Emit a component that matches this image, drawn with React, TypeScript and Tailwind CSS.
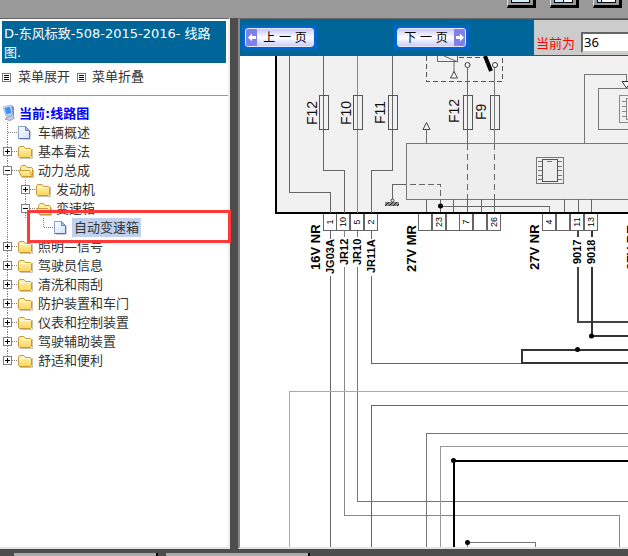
import type { ReactNode } from "react";

const CJK = "font-['DejaVu_Sans','Noto_Sans_CJK_SC',sans-serif]";

type Kind = "page" | "folder" | "open";
type Cell = "line" | "tee" | "elbow" | "blank" | "plus" | "minus";
type Node = { label: string; kind: Kind; cells: Cell[]; selected?: boolean };

const nodes: Node[] = [
  { label: "车辆概述", kind: "page", cells: ["tee"] },
  { label: "基本看法", kind: "folder", cells: ["plus"] },
  { label: "动力总成", kind: "open", cells: ["minus"] },
  { label: "发动机", kind: "folder", cells: ["line", "plus"] },
  { label: "变速箱", kind: "open", cells: ["line", "minus"] },
  { label: "自动变速箱", kind: "page", cells: ["line", "blank", "elbow"], selected: true },
  { label: "照明—信号", kind: "folder", cells: ["plus"] },
  { label: "驾驶员信息", kind: "folder", cells: ["plus"] },
  { label: "清洗和雨刮", kind: "folder", cells: ["plus"] },
  { label: "防护装置和车门", kind: "folder", cells: ["plus"] },
  { label: "仪表和控制装置", kind: "folder", cells: ["plus"] },
  { label: "驾驶辅助装置", kind: "folder", cells: ["plus"] },
  { label: "舒适和便利", kind: "folder", cells: ["plus"] },
];

function CellArt({ type, last }: { type: Cell; last: boolean }) {
  const boxed = type === "plus" || type === "minus";
  return (
    <svg width="18" height="19" className="block shrink-0" shapeRendering="crispEdges" aria-hidden="true">
      {type !== "blank" && (
        <path d={type === "elbow" || last ? "M7.5 0V10" : "M7.5 0V19"} stroke="#808080" strokeDasharray="1 1" />
      )}
      {type !== "blank" && type !== "line" && <path d="M8 9.5H18" stroke="#808080" strokeDasharray="1 1" />}
      {boxed && (
        <>
          <rect x="3.5" y="5.5" width="8" height="8" fill="#fff" stroke="#808080" />
          <path d={type === "plus" ? "M5 9.5H10M7.5 7V12" : "M5 9.5H10"} stroke="#000" />
        </>
      )}
    </svg>
  );
}

function NodeIcon({ kind }: { kind: Kind }) {
  return (
    <svg width="18" height="19" className="block shrink-0" aria-hidden="true">
      <defs>
        <linearGradient id="folderFill" x1="0" y1="0" x2="0" y2="1">
          <stop offset="0" stopColor="#fff3b8" />
          <stop offset="1" stopColor="#fbd65c" />
        </linearGradient>
        <linearGradient id="pageFill" x1="0" y1="0" x2="1" y2="1">
          <stop offset="0" stopColor="#ffffff" />
          <stop offset="1" stopColor="#cfe0ff" />
        </linearGradient>
      </defs>
      {kind === "page" && (
        <>
          <path d="M2 16.500H12.500V8" fill="none" stroke="#d0d0d4" />
          <path d="M0.500 3.500H7.500L11.500 7.500V15.500H0.500Z" fill="url(#pageFill)" stroke="#8d9fcf" />
          <path d="M11.500 8V15.500H1" fill="none" stroke="#5a6caa" />
          <path d="M7.500 3.500V7.500H11.500Z" fill="#9ebcf2" stroke="#6f86c4" />
        </>
      )}
      {kind === "folder" && (
        <>
          <path d="M2 16.500H14.500V7" fill="none" stroke="#c8c4ba" />
          <path d="M0.500 14.500V5.500L2 4.500H6L7.500 6.500H12.500L13.500 7.500V14.500L12.500 15.500H1.500Z" fill="url(#folderFill)" stroke="#c69a35" />
          <path d="M1.500 7.500H12.500" stroke="#fffbe0" />
        </>
      )}
      {kind === "open" && (
        <>
          <path d="M4 16.500H15.500V9" fill="none" stroke="#c8c4ba" />
          <path d="M2.500 14V6.500L4 4.500H7.500L9 6.500H13.500L14.500 7.500V14.500H3Z" fill="#ffefa6" stroke="#c69a35" />
          <path d="M0.500 9.500H11.500L14.500 15.500H3.500Z" fill="url(#folderFill)" stroke="#c69a35" />
        </>
      )}
    </svg>
  );
}

function MenuIcon() {
  return (
    <svg width="9" height="9" shapeRendering="crispEdges" className="block shrink-0" aria-hidden="true">
      <rect x="0.5" y="0.5" width="8" height="8" fill="#fff" stroke="#777" />
      <path d="M2 2.500H7M2 4.500H7M2 6.500H7" stroke="#000" />
    </svg>
  );
}

function ComputerIcon() {
  return (
    <svg width="17" height="19" className="block shrink-0" aria-hidden="true">
      <path d="M1 3L9 1L11 10L4 12Z" fill="#d5e6fb" stroke="#a9bddc" />
      <path d="M2.500 4L8 2.500L9.500 9L4.500 10.500Z" fill="#3f93f2" />
      <path d="M9.500 1L12 3V13L10.500 11Z" fill="#7f90c0" />
      <path d="M5 13L10 11.500L12.500 14L8 16.500L3 15Z" fill="#c3cce2" stroke="#8f9cc0" />
    </svg>
  );
}

function Sidebar() {
  return (
    <aside className="relative w-[230px] shrink-0 border-t border-r-2 border-b-2 border-t-[#666] border-r-[#eee] border-b-[#e4e4e4] bg-white pt-[2px] text-[13px] text-[#333]">
      <h1 className="mr-[2px] ml-[2px] bg-[#006699] px-[2px] pt-[3px] pb-px text-[13px] leading-[19px] font-normal text-white">
        D-东风标致-508-2015-2016- 线路图.
      </h1>
      <div className="flex h-[33px] items-center border-b border-[#999] pb-1 pl-[2px]">
        <button className="mr-[7px] flex items-center gap-[7px]"><MenuIcon />菜单展开</button>
        <button className="flex items-center gap-[6px]"><MenuIcon />菜单折叠</button>
      </div>
      <div className="mt-[8px] flex h-[19px] items-center pl-[2px] font-bold text-[#0000ff]">
        <ComputerIcon />
        <a href="#root">当前:线路图</a>
      </div>
      <ul>
        {nodes.map((n, i) => (
          <li key={n.label} className="flex h-[19px] items-center">
            {n.cells.map((c, k) => (
              <CellArt key={k} type={c} last={i === nodes.length - 1} />
            ))}
            <NodeIcon kind={n.kind} />
            <a
              href="#node"
              className={n.selected ? "bg-[#c1d2ee] px-[2px] leading-[19px]" : "px-[2px] leading-[19px]"}
            >
              {n.label}
            </a>
          </li>
        ))}
      </ul>
      <div className="absolute top-[191px] left-[27px] z-10 h-[33px] w-[204px] border-3 border-[#ff3838]" />
    </aside>
  );
}

function PageButton({ children, back }: { children: ReactNode; back?: boolean }) {
  const arrow = (
    <span className="flex h-full w-[11px] items-center justify-center bg-[#8080ea]">
      <svg width="8" height="9" aria-hidden="true">
        <path d={back ? "M0 4.500L4 0.500V3H8V6H4V8.500Z" : "M8 4.500L4 0.500V3H0V6H4V8.500Z"} fill="#fff" />
      </svg>
    </span>
  );
  return (
    <button className="h-[25px] w-[75px] shrink-0 border-3 border-[#0066cc] bg-[#0066cc]">
      <span className="flex h-[19px] items-center overflow-hidden rounded-[3px] border border-[#e8e8ff] bg-linear-to-b from-[#c8c8fb] via-white to-[#ccccfc] text-[12px] font-normal text-black">
        {back && arrow}
        <span className="flex-1 text-center">{children}</span>
        {!back && arrow}
      </span>
    </button>
  );
}

type WireProps = { d: string; c?: string; w?: number; dash?: string };
function Wire({ d, c = "#666", w = 1, dash }: WireProps) {
  return <path d={d} fill="none" stroke={c} strokeWidth={w} strokeDasharray={dash} />;
}

const fuses = [
  { x: 323, label: "F12", tx: 317, ty: 125 },
  { x: 357, label: "F10", tx: 351, ty: 125 },
  { x: 392, label: "F11", tx: 385, ty: 124 },
  { x: 467, label: "F12", tx: 459, ty: 123 },
  { x: 494, label: "F9", tx: 486, ty: 120 },
];

const pins = [
  { x: 324, n: "1" }, { x: 337, n: "10" }, { x: 351, n: "5" }, { x: 365, n: "2" },
  { x: 419, n: "" }, { x: 433, n: "23" }, { x: 447, n: "" }, { x: 460, n: "7" }, { x: 474, n: "" }, { x: 488, n: "26" },
  { x: 543, n: "4" }, { x: 557, n: "" }, { x: 571, n: "11" }, { x: 585, n: "13" },
];

const connectors = [
  { x: 320, y: 270, t: "16V NR" }, { x: 416, y: 272, t: "27V MR" }, { x: 539, y: 270, t: "27V NR" }, { x: 636, y: 270, t: "27V BE" },
];

const wireNames = [
  { x: 334, y: 274, t: "JG03A" }, { x: 348, y: 265, t: "JR12" }, { x: 361, y: 265, t: "JR10" },
  { x: 375, y: 273, t: "JR11A" }, { x: 581, y: 264, t: "9017" }, { x: 595, y: 264, t: "9018" },
];

function Diagram() {
  return (
    <svg
      width="388"
      height="491"
      viewBox="240 56 388 491"
      className="block shrink-0 font-['Liberation_Sans',Arial,sans-serif]"
      shapeRendering="crispEdges"
      role="img"
      aria-label="线路图"
    >
      <rect x="276" y="56" width="352" height="157" fill="#f1f1f1" />
      <Wire d="M276 56V213H628" c="#000" w={2} />
      <Wire d="M289.500 56V192.500H330.500V213" />
      <Wire d="M323.500 56V170.500H344.500V213" />
      <Wire d="M357.500 56V213" c="#888" />
      <Wire d="M392.500 56V170.500H371.500V213" />
      {fuses.map((f) => (
        <g key={f.x}>
          <rect x={f.x - 3.5} y="95.500" width="9" height="34" fill="none" stroke="#555" />
          <text x={f.tx} y={f.ty} transform={`rotate(-90 ${f.tx} ${f.ty})`} fontSize="14" fill="#111">{f.label}</text>
        </g>
      ))}
      <path d="M423 129.500L426.500 122.500L430 129.500Z" fill="none" stroke="#444" shapeRendering="auto" />
      <Wire d="M426.500 129V143" />
      <rect x="406.500" y="143.500" width="230" height="56" fill="#eee" stroke="#777" />
      <Wire d="M584.500 143V74.500H626.500V82M628 88.500H598.500V129.500H628" c="#777" />
      <path d="M622 81.500H631L626.500 88Z" fill="#fff" stroke="#333" shapeRendering="auto" />
      <Wire d="M628 95.500H619.500V122.500H628M628 98.500H626.500V119.500H628M622 101.500H626M622 106.500H626M622 111.500H626M622 116.500H626" c="#888" />
      <Wire d="M426.500 56V81.500H502.500V56" c="#555" dash="5 3" />
      <path d="M437.500 56V61.500H457.500V56M444 56L458 62M454 61V72" fill="none" stroke="#666" shapeRendering="auto" />
      <path d="M450.500 78L454 71.500L457.500 78Z" fill="#fff" stroke="#444" shapeRendering="auto" />
      <Wire d="M459 57.500H486" c="#555" dash="5 3" />
      <Wire d="M467.500 68V144" />
      <Wire d="M494.500 68V144" c="#777" />
      <g shapeRendering="auto">
        <circle cx="467.500" cy="65" r="2.500" fill="#fff" stroke="#333" />
        <circle cx="495" cy="65" r="2.500" fill="#fff" stroke="#333" />
        <path d="M485 56L491 71" stroke="#000" strokeWidth="4" />
      </g>
      <Wire d="M467.500 144V199" dash="6 4" />
      <Wire d="M494.500 144V199" dash="6 4" />
      <Wire d="M406 184.500H392.500V200" />
      <Wire d="M410 184.500H440.500V205" dash="6 3" />
      <g shapeRendering="auto">
        <circle cx="392.500" cy="200.500" r="1.500" fill="#fff" stroke="#333" />
        <path d="M385 202H399V206H385Z" fill="#888" />
        <path d="M385 206L389 202M389 206L393 202M393 206L397 202M397 206L399 204" stroke="#222" />
      </g>
      <Wire d="M426.500 199V212M440.500 204V212M453.500 199V212M467.500 199V212M481.500 199V212M494.500 199V212M564.500 199V212M578.500 199V212M591.500 199V212M440 206.500H549.500V212" />
      <circle cx="440.500" cy="206" r="2.500" shapeRendering="auto" />
      <rect x="536.500" y="157.500" width="27" height="26" fill="none" stroke="#777" />
      <rect x="542.500" y="159.500" width="15" height="22" fill="none" stroke="#555" />
      <Wire d="M538 161.500H542M538 166.500H542M538 170.500H542M538 175.500H542M538 179.500H542M558 161.500H562M558 166.500H562M558 170.500H562M558 175.500H562M558 179.500H562M547 161.500H552" c="#777" />

      {pins.map((p) => (
        <g key={p.x}>
          <path d={`M${p.x - 0.5} 214V230.500H${p.x + 12.5}V214`} fill="#fff" stroke="#666" />
          <text x={p.x + 9} y="222" textAnchor="middle" transform={`rotate(-90 ${p.x + 9} 222)`} fontSize="9" fill="#000">{p.n}</text>
        </g>
      ))}
      {connectors.map((t) => (
        <text key={t.t} x={t.x} y={t.y} transform={`rotate(-90 ${t.x} ${t.y})`} fontSize="13" fontWeight="700" fill="#000">{t.t}</text>
      ))}

      <Wire d="M330.500 231V239M330.500 276V547" />
      <Wire d="M344.500 231V237M344.500 267V515.500H619.500V547" c="#888" />
      <Wire d="M357.500 231V237M357.500 267V501.500H628" c="#777" />
      <Wire d="M371.500 231V239M371.500 276V363.500H522" />
      <Wire d="M578 231V237M578 267V322H628" c="#444" w={2} />
      <Wire d="M592 231V237M592 267V336H628" c="#333" w={2} />
      <Wire d="M628 350H522V363H628" c="#333" w={2} />
      {wireNames.map((t) => (
        <text key={t.t} x={t.x} y={t.y} transform={`rotate(-90 ${t.x} ${t.y})`} fontSize="11" fontWeight="700" fill="#000">{t.t}</text>
      ))}
      <Wire d="M289.500 547V391.500H628" c="#aaa" />
      <Wire d="M371.500 547V405.500H628" />
      <Wire d="M426.500 547V433.500H628" c="#777" />
      <Wire d="M440.500 547V446.500H628" c="#999" />
      <Wire d="M454 547V461H628" c="#000" w={2} />
      <Wire d="M467.500 547V542.500H535.500V547" c="#777" />
      <g shapeRendering="auto">
        <circle cx="591.500" cy="336" r="2.500" />
        <circle cx="577.500" cy="349.500" r="2.500" />
        <circle cx="453.500" cy="460.500" r="2.500" />
        <circle cx="467.500" cy="542.500" r="2.500" />
      </g>
    </svg>
  );
}

function ToolButton({ kind, label }: { kind: "single" | "split" | "side"; label: string }) {
  return (
    <button
      aria-label={label}
      className="flex h-[8px] w-[29px] items-start justify-center border-r-3 border-b-3 border-l border-r-black border-b-black border-l-[#ddd] bg-[#999]"
    >
      <span className="flex h-[3px] w-[19px] gap-px border-x border-b border-black bg-black">
        <span className={kind === "side" ? "w-[3px] bg-[#cceeff]" : "flex-1 bg-[#cceeff]"} />
        {kind !== "single" && <span className="flex-1 bg-white" />}
      </span>
    </button>
  );
}

export default function App() {
  return (
    <div className={`flex h-screen flex-col overflow-hidden bg-[#4d4d4d] ${CJK}`}>
      <header className="flex h-[18px] shrink-0 justify-end gap-[14px] bg-[#999] pr-[6px]">
        <ToolButton kind="single" label="单页" />
        <ToolButton kind="split" label="双页" />
        <ToolButton kind="side" label="布局" />
      </header>
      <div className="flex min-h-0 flex-1">
        <Sidebar />
        <main className="ml-2 flex min-w-0 flex-1 flex-col overflow-hidden border-t border-b-2 border-l-2 border-t-[#666] border-b-[#e4e4e4] border-l-[#888] bg-white">
          <div className="flex h-[37px] shrink-0 bg-[#006699]">
            <div className="flex min-w-0 flex-1 items-center gap-[77px] pl-[2px]">
              <PageButton back>上 一 页</PageButton>
              <PageButton>下 一 页</PageButton>
            </div>
            <div className="mt-px mb-px flex w-[94px] shrink-0 items-end overflow-hidden bg-[#ccc] pb-[2px] pl-[2px]">
              <label htmlFor="page" className="w-[45px] shrink-0 text-[13px] leading-[18px] text-[#ff0000]">当前为</label>
              <input
                id="page"
                defaultValue="36"
                className="h-[21px] w-[60px] shrink-0 border-2 border-[#d4d0c8] border-t-[#666] border-l-[#666] bg-white px-px pb-[2px] font-['Noto_Sans',sans-serif] text-[13px] text-black"
              />
            </div>
          </div>
          <div className="min-h-0 flex-1 overflow-hidden">
            <Diagram />
          </div>
        </main>
      </div>
      <footer className="flex h-[7px] shrink-0 items-end gap-2 pl-[14px]">
        <div className="h-[3px] w-[144px] border-r-2 border-black bg-[#aaa]" />
        <div className="h-[3px] w-[144px] border-r-2 border-black bg-[#aaa]" />
      </footer>
    </div>
  );
}
